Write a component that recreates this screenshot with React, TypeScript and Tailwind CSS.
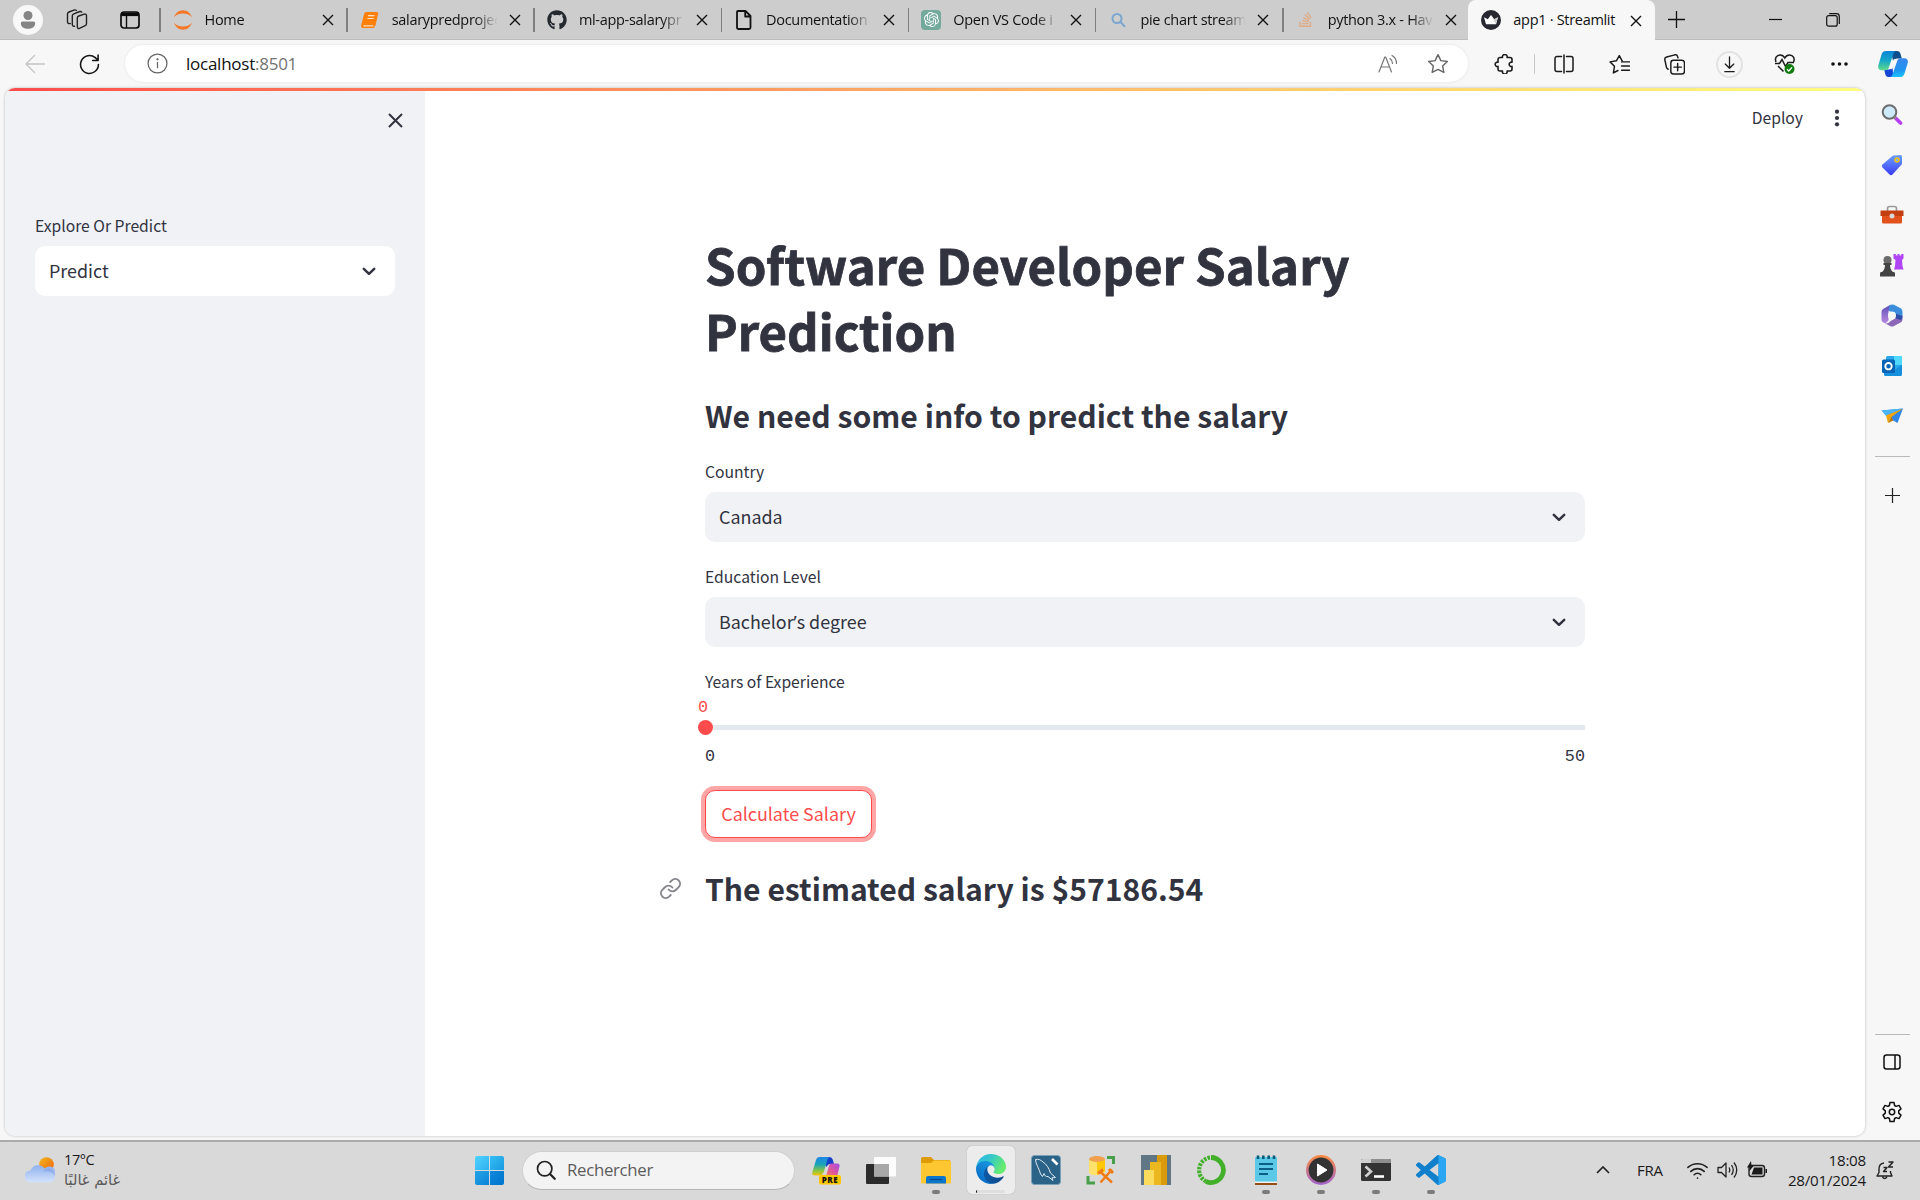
import React from "react";
import { FaGithub, FaStackOverflow } from "react-icons/fa";
import { SiOpenai } from "react-icons/si";
import { Wifi } from "lucide-react";

type Kids = { children?: React.ReactNode };

const SEGOE = "font-['Open_Sans','Noto_Sans',sans-serif]";
const SOURCE = "font-['Noto_Sans_CJK_SC',sans-serif]";

/* ---------- generic line icon ---------- */
function Ico({ s = 20, sw = 1.3, c = "#1b1b1b", children }: Kids & { s?: number; sw?: number; c?: string }) {
  return (
    <svg width={s} height={s} viewBox="0 0 20 20" fill="none" stroke={c} strokeWidth={sw} strokeLinecap="round" strokeLinejoin="round" className="shrink-0">
      {children}
    </svg>
  );
}

function Cross({ s = 12, sw = 1.4, c = "#111" }: { s?: number; sw?: number; c?: string }) {
  return (
    <svg width={s} height={s} viewBox={`0 0 ${s} ${s}`} stroke={c} strokeWidth={sw} className="shrink-0">
      <path d={`M1 1L${s - 1} ${s - 1}M${s - 1} 1L1 ${s - 1}`} />
    </svg>
  );
}

/* ---------- tab favicons ---------- */
const Jupyter = () => (
  <svg width="20" height="20" viewBox="0 0 20 20" fill="#f37726">
    <path d="M1 7.2C2.400 3 5.800 .2 10 .2s7.600 2.800 9 7C17.200 4.900 14 3.500 10 3.500S2.800 4.900 1 7.200z" />
    <path d="M1 12.800C2.400 17 5.800 19.800 10 19.800s7.600-2.800 9-7c-1.800 2.300-5 3.700-9 3.700s-7.200-1.400-9-3.700z" />
  </svg>
);
const Book = () => (
  <svg width="20" height="20" viewBox="0 0 20 20">
    <path d="M6.500 2h10.200c1.200 0 1.700.8 1.400 1.900L15.500 15.500c-.2.800-.8 1.200-1.500 1.200l.3 1.300H3.200C1.500 18 .8 16.800 1.200 15.200L4 4.200C4.400 2.800 5.100 2 6.500 2z" fill="#ff7f0b" />
    <path d="M8 5.700h6.500M7.300 8.500h6.500M3.500 15.800h10" stroke="#ffe2c4" strokeWidth="1.200" />
  </svg>
);
const Doc = () => (
  <Ico sw={1.8} c="#111">
    <path d="M4 1h7.500l5 5v11.500a1.500 1.500 0 0 1-1.500 1.500H4.500A1.500 1.500 0 0 1 3 17.500V2a1 1 0 0 1 1-1zM11.200 1.300V6.500h5" />
  </Ico>
);
const GPT = () => (
  <span className="flex size-5 items-center justify-center rounded-[4px] bg-[#74aa9c]">
    <SiOpenai size={15} color="#fff" />
  </span>
);
const Mag = () => (
  <Ico sw={2} c="#7ba6d0">
    <circle cx="9" cy="8.500" r="4.500" />
    <path d="M12.500 12l4 4.200" />
  </Ico>
);
const Crown = () => (
  <svg width="20" height="20" viewBox="0 0 20 20">
    <circle cx="10" cy="10" r="10" fill="#262730" />
    <path d="M3 7.200l3.800 2L10 5l3.200 4.200 3.800-2-2 7H5z" fill="#fff" />
    <path d="M10 5l3.200 4.200 3.800-2-2 7z" fill="#ccc" />
  </svg>
);

const tabs: { icon: React.ReactNode; title: string; active?: boolean }[] = [
  { icon: <Jupyter />, title: "Home" },
  { icon: <Book />, title: "salarypredproject" },
  { icon: <FaGithub size={20} color="#24292f" />, title: "ml-app-salarypr" },
  { icon: <Doc />, title: "Documentation" },
  { icon: <GPT />, title: "Open VS Code i" },
  { icon: <Mag />, title: "pie chart stream" },
  { icon: <FaStackOverflow size={17} color="#e0ab84" />, title: "python 3.x - Hav" },
  { icon: <Crown />, title: "app1 · Streamlit", active: true },
];

function TabBar() {
  return (
    <div className="flex h-10 items-stretch border-b border-[#bdbdbd] bg-[#cdcdcd]">
      <div className="flex w-[159px] items-center pl-[13px]">
        <span className="flex size-[30px] items-center justify-center rounded-full bg-[#f8f8f8]">
          <svg width="16" height="18" viewBox="0 0 16 18" fill="#858585">
            <circle cx="8" cy="4.500" r="4.500" />
            <path d="M2.500 10.500h11A1.700 1.700 0 0 1 15.200 12.200c0 3.700-3.200 5.500-7.200 5.500S.8 15.900.8 12.200A1.700 1.700 0 0 1 2.500 10.500z" />
          </svg>
        </span>
        <span className="ml-[23px]">
          <svg width="22" height="21" viewBox="0 0 22 21" fill="none" stroke="#222" strokeWidth="1.400" strokeLinecap="round">
            <path d="M11.300 8.800q.1-1.300 1.400-1.800l5.600-1.900q2-.5 2.200 1.500v8.200q0 1.300-1.300 1.800l-5.700 2.700q-2 .6-2.200-1.300z" />
            <path d="M8.500 17.300q-2 .2-2.200-1.500V6.800q.1-1.400 1.500-2l6-2.300q1.300-.3 1.900.6" />
            <path d="M4.200 14.500q-2.500.5-2.700-1.500V5q.1-1.400 1.500-2l5.500-2.100q1.200-.2 1.800.5" />
          </svg>
        </span>
        <span className="ml-8">
          <svg width="20" height="18" viewBox="0 0 20 18" fill="none" stroke="#0b0b0b" strokeWidth="1.700">
            <rect x="1" y="1" width="18" height="16" rx="3" />
            <path d="M1.500 3.300h17" strokeWidth="3.600" />
            <path d="M6.500 5v12" strokeWidth="1.400" />
          </svg>
        </span>
      </div>
      {tabs.map((t, i) => (
        <div
          key={i}
          className={
            t.active
              ? "-mr-px -mb-px -ml-px flex w-[187px] items-center rounded-t-[8px] bg-[#f7f7f7] pl-[13px]"
              : "flex w-[187.2px] items-center"
          }
        >
          {!t.active && <span className="mr-3 h-6 w-[1.500px] shrink-0 bg-[#808080]" />}
          <span className="flex size-5 shrink-0 items-center justify-center">{t.icon}</span>
          <span
            className={
              (t.active ? "" : "[mask-image:linear-gradient(to_right,#000_76%,transparent_97%)] ") +
              "ml-3 w-[109px] overflow-hidden text-[14.5px] leading-6 tracking-[-0.3px] whitespace-nowrap text-[#111]"
            }
          >
            {t.title}
          </span>
          <span className="ml-[6px] flex w-4 shrink-0 justify-center pt-px">
            <Cross />
          </span>
        </div>
      ))}
      <div className="flex flex-1 items-center pl-[14px]">
        <svg width="17" height="17" viewBox="0 0 17 17" stroke="#111" strokeWidth="1.300">
          <path d="M8.500 0v17M0 8.500h17" />
        </svg>
        <svg width="13" height="13" viewBox="0 0 13 13" stroke="#111" strokeWidth="1.200" className="ml-[84px]">
          <path d="M0 6.500h13" />
        </svg>
        <svg width="14" height="14" viewBox="0 0 14 14" fill="none" stroke="#111" strokeWidth="1.200" className="ml-[44px]">
          <rect x=".7" y="2.700" width="10.500" height="10.500" rx="2" />
          <path d="M3.200.7H10.500a2.800 2.800 0 0 1 2.800 2.800V11" />
        </svg>
        <span className="ml-[44px]">
          <Cross s={14} sw={1.2} />
        </span>
      </div>
    </div>
  );
}

function Copilot() {
  return (
    <svg width="30" height="26" viewBox="0 0 30 26">
      <defs>
        <linearGradient id="cpa" x1="0" y1="0" x2="0" y2="1">
          <stop offset="0" stopColor="#0a84d8" />
          <stop offset=".5" stopColor="#16a7c6" />
          <stop offset="1" stopColor="#5fdc8c" />
        </linearGradient>
        <linearGradient id="cpb" x1="0" y1="0" x2="0" y2="1">
          <stop offset="0" stopColor="#3a86ec" />
          <stop offset=".6" stopColor="#1f93f0" />
          <stop offset="1" stopColor="#18c2ff" />
        </linearGradient>
      </defs>
      <path d="M15 0h4c2 0 3 1.300 3.500 3l1.300 4.500h-4c-3 0-4 1.500-4.700 3L13 0z" fill="#0d4f8c" />
      <path d="M15 26h-4.500c-1.800 0-2.800-1.300-3.300-3l-1-4.500h4.300c2.500 0 3.600-1.600 4.300-3z" fill="#1546d8" />
      <path d="M8 0h10c-1.800.3-2.400 2-3 4l-4 12c-.7 2.200-2 3.200-4 3.200H3.500C.8 19.200-.3 17.300.3 14.600L3.500 3.600C4.200 1.200 5.500 0 8 0z" fill="url(#cpa)" />
      <path d="M22 26H12c1.800-.3 2.400-2 3-4l4-11.500c.7-2.200 2-3.200 4-3.200h3.500c2.700 0 3.800 1.900 3.200 4.600l-3.200 10.500C25.800 24.800 24.500 26 22 26z" fill="url(#cpb)" />
      <path d="M15.800 8L18 8.500 14.200 18.500l-2-1z" fill="#f7f7f7" />
    </svg>
  );
}

const starPath = "M10 1.500l2.600 5.400 5.900.8-4.300 4.100 1.100 5.900L10 14.900l-5.300 2.800 1.100-5.900L1.500 7.700l5.900-.8z";

function Toolbar() {
  return (
    <div className="flex h-12 items-center bg-[#f7f7f7]">
      <span className="ml-[25px] flex">
        <Ico c="#c4c4c4" sw={1.3}>
          <path d="M19.500 10H1M9.500 1.500L1 10l8.500 8.500" />
        </Ico>
      </span>
      <span className="ml-[34px] flex">
        <Ico s={21} c="#161616" sw={1.5}>
          <path d="M18.500 10A8.500 8.500 0 1 1 15.500 3.500L18 6M18.200 1v5.200H13" />
        </Ico>
      </span>
      <div className="-mt-px ml-[25px] flex h-[37px] w-[1343px] items-center rounded-full bg-white pl-[22px] shadow-[0_0_3px_rgba(0,0,0,0.09)]">
        <Ico c="#666" sw={1.2} s={21}>
          <circle cx="10" cy="10" r="9" />
          <path d="M10 9v5" />
          <circle cx="10" cy="6" r=".5" fill="#666" />
        </Ico>
        <span className="ml-[18px] text-[17px] tracking-[-0.25px] text-[#111]">
          localhost<span className="text-[#737373]">:8501</span>
        </span>
        <span className="mr-[19px] ml-auto flex items-center gap-[29px]">
          <Ico c="#777" sw={1.2}>
            <path d="M1 18L6.800 3h.9L13.500 18M3 13h8.500M12 4.500a6 6 0 0 1 2.500 5M14 1.500a9 9 0 0 1 4.500 8" />
          </Ico>
          <Ico c="#666" sw={1.3} s={22}>
            <path d={starPath} />
          </Ico>
        </span>
      </div>
      <span className="ml-[26px] flex">
        <svg width="21" height="20" viewBox="0 0 21 20" fill="none" stroke="#1b1b1b" strokeWidth="1.600" strokeLinejoin="round">
          <path d="M6 3.500h2.500a2.400 2.400 0 1 1 4.600 0H16a2 2 0 0 1 2 2v2.700a2.200 2.200 0 1 0 0 4.200v2.600a2 2 0 0 1-2 2h-2.900a2.400 2.400 0 1 1-4.600 0H6a2 2 0 0 1-2-2v-2.600a2.200 2.200 0 1 1 0-4.200V5.500a2 2 0 0 1 2-2z" />
        </svg>
      </span>
      <span className="ml-[19px] h-5 w-px bg-[#c8c8c8]" />
      <span className="ml-[19px] flex">
        <Ico sw={1.5}>
          <path d="M7.500 2.500H3A2 2 0 0 0 1 4.500v11a2 2 0 0 0 2 2h4.500M12.500 2.500H17a2 2 0 0 1 2 2v11a2 2 0 0 1-2 2h-4.500M10 1v18" />
        </Ico>
      </span>
      <span className="ml-[35px] flex">
        <Ico sw={1.4} s={21}>
          <path d="M12.500 6.500L9.800 1.500 7 6.500l-6 1 4.200 4.200L4.200 18l4.300-2.300M12 7.500h7.500M12 11.500h7.500M12 15.500h7.500" />
        </Ico>
      </span>
      <span className="ml-[34px] flex">
        <Ico sw={1.4} s={21}>
          <rect x="6.500" y="6" width="13" height="13" rx="2.500" />
          <path d="M13 9v7M9.500 12.500h7M4 14.500l-.6-.3A3 3 0 0 1 2.200 12L.8 5.500a2.300 2.300 0 0 1 1.700-2.700l7.800-2A2.300 2.300 0 0 1 13 2.500l.3 1" />
        </Ico>
      </span>
      <span className="ml-[31px] flex size-[27px] items-center justify-center rounded-full border-2 border-[#e2e2e2]">
        <Ico sw={1.5} s={17}>
          <path d="M10 1v13M5 9.500l5 5 5-5M4.500 18.500h11" />
        </Ico>
      </span>
      <span className="ml-[31px] flex">
        <svg width="22" height="22" viewBox="0 0 22 22" fill="none" stroke="#1b1b1b" strokeWidth="1.500">
          <path d="M2 9C.5 5.500 2.500 2 6 2c2.300 0 4 1.500 4.800 3C11.600 3.500 13.300 2 15.600 2c3.500 0 5.500 3.500 4 7M1 10.500h4.500L8 6.500l3.500 7 2.500-4h6M4 13l5.500 5.500" />
          <circle cx="15.500" cy="16" r="5" fill="#107c10" stroke="none" />
          <path d="M13 16.200l1.800 1.800 3.200-3.600" stroke="#fff" strokeWidth="1.300" />
        </svg>
      </span>
      <svg width="17" height="4" viewBox="0 0 17 4" fill="#111" className="ml-[35px]">
        <circle cx="2" cy="2" r="1.800" />
        <circle cx="8.500" cy="2" r="1.800" />
        <circle cx="15" cy="2" r="1.800" />
      </svg>
      <span className="ml-[30px] flex">
        <Copilot />
      </span>
    </div>
  );
}

/* ---------- Streamlit page ---------- */
const Chevron = () => (
  <svg width="14" height="9" viewBox="0 0 14 9" fill="none" stroke="#31333f" strokeWidth="2.500" strokeLinecap="round" strokeLinejoin="round">
    <path d="M1.800 1.800L7 6.800l5.200-5" />
  </svg>
);

function Field({ label, value, white }: { label: string; value: React.ReactNode; white?: boolean }) {
  return (
    <div className="flex flex-col">
      <span className="flex h-[31px] items-start pt-px text-[15.7px] leading-5 text-[#31333f]">{label}</span>
      <div className={(white ? "bg-white" : "bg-[#f0f2f6]") + " flex h-[50px] items-center justify-between rounded-[10px] pr-[19px] pl-[14px]"}>
        <span className="pb-[2px] text-[17.9px] leading-6 whitespace-nowrap text-[#31333f]">{value}</span>
        <Chevron />
      </div>
    </div>
  );
}

function Page() {
  return (
    <div className={SOURCE + " ml-[5px] flex h-[1048px] w-[1860px] flex-col overflow-hidden rounded-[10px] bg-white shadow-[0_0_3px_rgba(0,0,0,0.25)]"}>
      <div className="h-[3px] shrink-0 bg-linear-to-r from-[#ff4b4b] to-[#fffd80]" />
      <div className="flex flex-1">
        <aside className="flex w-[420px] flex-col bg-[#f0f2f6] px-[30px]">
          <div className="flex h-[124px] justify-end pt-[22px]">
            <span className="-mr-[8px]">
              <Cross s={15} sw={2} c="#31333f" />
            </span>
          </div>
          <Field label="Explore Or Predict" value="Predict" white />
        </aside>
        <main className="flex flex-1 flex-col text-[#31333f]">
          <header className="flex h-[54px] items-center justify-end pr-[25px]">
            <span className="text-[15.700px] leading-5">Deploy</span>
            <svg width="6" height="18" viewBox="0 0 6 18" fill="#31333f" className="ml-[31px]">
              <circle cx="3" cy="2.700" r="2.100" />
              <circle cx="3" cy="9" r="2.100" />
              <circle cx="3" cy="15.300" r="2.100" />
            </svg>
          </header>
          <div className="ml-[280px] flex w-[880px] flex-col">
            <h1 className="mt-[86px] text-[49.1px] leading-[66px] font-bold [-webkit-text-stroke:0.8px_#31333f]">
              Software Developer Salary
              <br />
              Prediction
            </h1>
            <h3 className="mt-[31px] h-[67px] text-[30.15px] leading-[42px] font-semibold">We need some info to predict the salary</h3>
            <Field label="Country" value="Canada" />
            <div className="h-6" />
            <Field
              label="Education Level"
              value={
                <>
                  Bachelor<span className="font-['Noto_Sans']">’</span>s degree
                </>
              }
            />
            <div className="h-6" />
            <span className="h-5 pt-px text-[15.7px] leading-5">Years of Experience</span>
            <span className="mt-[7px] -ml-[7px] font-['Liberation_Mono',monospace] text-[16.800px] leading-5 text-[#ff4b4b]">0</span>
            <div className="mt-[2px] -ml-[7.500px] flex h-[15px] items-center">
              <span className="size-[15px] rounded-full bg-[#ff4b4b]" />
              <span className="h-[5px] flex-1 bg-[#e4e8ef]" />
            </div>
            <div className="mt-[12px] flex justify-between font-['Liberation_Mono',monospace] text-[16.800px] leading-5">
              <span>0</span>
              <span>50</span>
            </div>
            <button className="mt-[23px] h-[48px] w-[167px] rounded-[10px] border border-[#ff4b4b] bg-white pb-[2px] text-[17.9px] leading-6 whitespace-nowrap text-[#ff4b4b] shadow-[0_0_0_4px_#ffa5a5]">
              Calculate Salary
            </button>
            <div className="mt-[29px] -ml-[46px] flex items-center">
              <svg width="23" height="23" viewBox="0 0 24 24" fill="none" stroke="#85868c" strokeWidth="2" strokeLinecap="round" strokeLinejoin="round">
                <path d="M10 13a5 5 0 0 0 7.540.540l3-3a5 5 0 0 0-7.070-7.070l-1.720 1.710" />
                <path d="M14 11a5 5 0 0 0-7.540-.540l-3 3a5 5 0 0 0 7.070 7.070l1.710-1.710" />
              </svg>
              <h3 className="ml-[23px] text-[30.1px] leading-[42px] font-semibold whitespace-nowrap">The estimated salary is $57186.54</h3>
            </div>
          </div>
        </main>
      </div>
    </div>
  );
}

/* ---------- Edge sidebar ---------- */
const sideIcons = [
  <svg width="22" height="22" viewBox="0 0 22 22">
    <path d="M14.500 14l5 5" stroke="#b63df0" strokeWidth="3.600" strokeLinecap="round" />
    <circle cx="8.500" cy="8" r="6.800" fill="#cdeafc" stroke="#6d6d6d" strokeWidth="2" />
    <path d="M13.300 12.800l1.700 1.700" stroke="#8a8a8a" strokeWidth="2" />
  </svg>,
  <svg width="22" height="22" viewBox="0 0 22 22">
    <defs>
      <linearGradient id="tag" x1="0" y1="0" x2="0" y2="1">
        <stop offset="0" stopColor="#6aa0ff" />
        <stop offset="1" stopColor="#3b3bf5" />
      </linearGradient>
    </defs>
    <path d="M12 1.500l7.500-.5q1.500 0 1.500 1.500v7.500L11.500 20.500q-1.500 1.500-3 0L1.500 13.500q-1.500-1.500 0-3z" fill="url(#tag)" />
    <circle cx="16" cy="6" r="2" fill="#7fb0ff" stroke="#f4c20d" strokeWidth="1.600" />
  </svg>,
  <svg width="24" height="20" viewBox="0 0 24 20">
    <path d="M7.500 6V3.500Q7.500 1.500 9.500 1.500h5q2 0 2 2V6" fill="none" stroke="#9a9a9a" strokeWidth="1.700" />
    <path d="M2 10h20v7q0 1.500-1.500 1.500h-17Q2 18.500 2 17z" fill="#e2511c" />
    <path d="M1 5.500h22q.5 0 .5.500v5H.5V6q0-.5.500-.5z" fill="#c33f10" />
    <circle cx="12" cy="11" r="2.500" fill="#d8d8d8" />
  </svg>,
  <svg width="24" height="24" viewBox="0 0 24 24">
    <path d="M13.500 1h2.300v1.500h1.700V1h2v1.500h1.700V1h2.300v4.500L22 7l.5 6 1 3.500H14l1-3.500.5-6-2-1.500z" fill="#b045f5" />
    <circle cx="7.500" cy="7" r="4" fill="#6b6b6b" />
    <path d="M3.500 10h8v2H10q0 4.500 3 7h1q1 0 1 2v2.500H0V21q0-2 1-2h1q3-2.500 3-7H3.500z" fill="#444" />
  </svg>,
  <svg width="22" height="23" viewBox="0 0 22 23">
    <defs>
      <linearGradient id="ma" x1="0" y1="0" x2="0" y2="1">
        <stop offset="0" stopColor="#5b4fb5" />
        <stop offset="1" stopColor="#b98ae0" />
      </linearGradient>
    </defs>
    <path d="M9.500 .8L2 5Q.5 6 .5 8v7.500q0 2 1.500 2.800l2.500 1.200 3-3V8q0-1 .5-2z" fill="url(#ma)" />
    <path d="M9.500 .8q2-.8 3.500 0L20 4.500Q21.500 5.500 21.500 8v4.500L14.500 10 8 7V4q0-2 1.500-3.200z" fill="#3b8edb" />
    <path d="M21.500 12v3.500q0 2-1.500 2.800L13 22q-2 1-4 0l-5-2.700q3.500.5 5-1.800l5.500-3.500 2-2.500z" fill="#8c69b8" />
    <path d="M14.500 9.500l7 2.500q0 3-2 4l-5.500-2z" fill="#2f4ea8" />
    <circle cx="11" cy="11.500" r="4" fill="#f7f7f7" />
  </svg>,
  <svg width="22" height="22" viewBox="0 0 22 22">
    <rect x="5" y="1" width="16" height="18" rx="1.500" fill="#28a8ea" />
    <path d="M13 1h6.500q1.500 0 1.500 1.500V10h-8z" fill="#50d9ff" />
    <path d="M3 20V11l9 5 9-6v9.500q0 1.500-1.500 1.500H4.500Q3 21 3 20z" fill="#1490df" />
    <rect x="1" y="4.500" width="13" height="13.500" rx="1.500" fill="#0364b8" />
    <circle cx="7.500" cy="11.200" r="3.200" fill="none" stroke="#fff" strokeWidth="1.900" />
  </svg>,
  <svg width="23" height="20" viewBox="0 0 23 20">
    <path d="M.5 4.500L22 2.500 16.500 17l-6-3.500z" fill="#2f86e8" />
    <path d="M.5 4.500L22 2.500 5 10z" fill="#49b7f7" />
    <path d="M5 9.500L22 2.500 10.500 11l-3.500 6z" fill="#f0a30a" />
    <path d="M7 17l3.500-6 1.800 3.500z" fill="#b87400" />
  </svg>,
];

function EdgeSidebar() {
  return (
    <div className="flex h-[1052px] w-[54.500px] flex-col items-center">
      <div className="mt-[2px] flex flex-col items-center">
        {sideIcons.map((icon, i) => (
          <span key={i} className="flex h-[50.100px] items-center justify-center">
            {icon}
          </span>
        ))}
      </div>
      <span className="mt-[15.500px] h-px w-[35px] bg-[#b9b9b9]" />
      <svg width="15" height="15" viewBox="0 0 15 15" stroke="#222" strokeWidth="1.200" className="mt-[31px]">
        <path d="M7.500 0v15M0 7.500h15" />
      </svg>
      <span className="mt-auto h-px w-[35px] bg-[#b9b9b9]" />
      <svg width="18" height="16" viewBox="0 0 18 16" fill="none" stroke="#111" strokeWidth="1.500" className="mt-[19px]">
        <rect x="1" y="1" width="16" height="14" rx="2.500" />
        <path d="M12 1v14" />
      </svg>
      <svg width="22" height="22" viewBox="0 0 22 22" fill="none" stroke="#111" strokeWidth="1.500" strokeLinejoin="round" className="mt-[31px] mb-[17px]">
        <path d="M9 1.500h4l.6 3 1.500.9 2.900-1 2 3.500-2.300 2v2.200l2.300 2-2 3.500-2.900-1-1.500.9-.6 3H9l-.6-3-1.500-.9-2.900 1-2-3.500 2.300-2V9.900L2 7.900l2-3.500 2.900 1 1.500-.9z" />
        <circle cx="11" cy="11" r="2.700" />
      </svg>
    </div>
  );
}

/* ---------- Taskbar ---------- */
const EdgeLogo = () => (
  <svg width="30" height="30" viewBox="0 0 256 256">
    <defs>
      <linearGradient id="e1" x1="0" y1="0" x2="1" y2="0">
        <stop offset="0" stopColor="#0c59a4" />
        <stop offset="1" stopColor="#114a8b" />
      </linearGradient>
      <linearGradient id="e2" x1=".8" y1="0" x2=".2" y2="1">
        <stop offset="0" stopColor="#1b9de2" />
        <stop offset="1" stopColor="#0667c4" />
      </linearGradient>
      <linearGradient id="e3" x1="0" y1="0" x2="1" y2=".4">
        <stop offset="0" stopColor="#2fb5ee" />
        <stop offset=".5" stopColor="#36c8c8" />
        <stop offset="1" stopColor="#66eb6e" />
      </linearGradient>
    </defs>
    <g transform="translate(-4.630 -4.920)">
      <path fill="url(#e1)" d="M235.680 195.460a93.730 93.730 0 0 1-10.540 4.710 101.870 101.870 0 0 1-35.900 6.460c-47.320 0-88.540-32.550-88.540-74.320A31.480 31.480 0 0 1 117.130 105c-42.800 1.800-53.800 46.400-53.800 72.530 0 73.880 68.090 81.370 82.760 81.370 7.910 0 19.840-2.300 27-4.560l1.310-.440A128.340 128.340 0 0 0 241 201.100a4 4 0 0 0-5.320-5.640Z" />
      <path fill="url(#e2)" d="M110.340 246.340A79.200 79.200 0 0 1 87.600 225a80.720 80.720 0 0 1 29.530-120c3.120-1.470 8.450-4.130 15.540-4a32.350 32.350 0 0 1 25.690 13 31.880 31.880 0 0 1 6.360 18.660c0-.210 24.460-79.600-80-79.600-43.900 0-80 41.660-80 78.210a130.150 130.150 0 0 0 12.110 56 128 128 0 0 0 156.380 67.110 75.550 75.550 0 0 1-62.780-8Z" />
      <path fill="url(#e3)" d="M156.940 153.780c-.810 1.050-3.300 2.500-3.300 5.660 0 2.610 1.700 5.120 4.720 7.230 14.380 10 41.490 8.680 41.560 8.680a59.560 59.560 0 0 0 30.270-8.350A61.380 61.380 0 0 0 260.620 114.100c.260-22.410-8-37.310-11.340-43.910C228.090 28.760 182.350 4.920 132.610 4.920a128 128 0 0 0-128 126.200c.480-36.540 36.800-66.050 80-66.050 3.500 0 23.460.340 42 10.070 16.340 8.580 24.900 18.940 30.850 29.210 6.180 10.670 7.280 24.150 7.280 29.520S162 147.200 156.940 153.780Z" />
    </g>
  </svg>
);

const apps: { icon: React.ReactNode; run?: boolean; active?: boolean }[] = [
  {
    icon: (
      <svg width="30" height="30" viewBox="0 0 30 30">
        <defs>
          <linearGradient id="pa" x1="0" y1="0" x2="0" y2="1">
            <stop offset="0" stopColor="#1f86e8" />
            <stop offset=".4" stopColor="#1aa4b8" />
            <stop offset=".75" stopColor="#8cc63f" />
            <stop offset="1" stopColor="#f4c20d" />
          </linearGradient>
          <linearGradient id="pb" x1="1" y1="0" x2="0" y2="1">
            <stop offset="0" stopColor="#a04be8" />
            <stop offset=".5" stopColor="#e0569c" />
            <stop offset="1" stopColor="#f7884a" />
          </linearGradient>
        </defs>
        <path d="M12 2h6.500q2.500 0 3.200 2.500L23 9h-5l-3 3z" fill="#1740c8" />
        <path d="M8.500 2H19q-2 .5-2.700 3l-3.500 12q-.8 3-3.300 3.500H4Q.5 20.500 1.400 17L5 5q.9-3 3.500-3z" fill="url(#pa)" />
        <path d="M20 8.500h6q3 0 2.500 3l-2 8.500q-.6 2-2.500 2H13q2-.5 2.700-3l2.200-8q.6-2.500 2.100-2.500z" fill="url(#pb)" />
        <rect x="8" y="20" width="22" height="9.500" rx="2" fill="#ffc800" />
        <text x="19" y="27.700" textAnchor="middle" fontSize="8" fontWeight="800" letterSpacing=".6" fontFamily="Open Sans" fill="#111">
          PRE
        </text>
      </svg>
    ),
  },
  {
    icon: (
      <svg width="30" height="30" viewBox="0 0 30 30">
        <rect x="0" y="9" width="23" height="20" rx="1" fill="#2b2b2b" />
        <rect x="8" y="2" width="22" height="19.500" rx="1" fill="#fff" fillOpacity=".9" />
        <rect x="8" y="9" width="15" height="12.500" fill="#a8a8a8" />
      </svg>
    ),
  },
  {
    run: true,
    icon: (
      <svg width="30" height="30" viewBox="0 0 30 30">
        <path d="M0 3.500Q0 2 1.500 2H10l3 3h16v5H0z" fill="#dd9b04" />
        <path d="M0 8h10l3-2.500h15.500q1.500 0 1.500 1.500v20.500q0 1-1 1H1q-1 0-1-1z" fill="#fdc731" />
        <path d="M5 28.500V23q0-2 2-2h16q2 0 2 2v5.500z" fill="#0b76cc" />
        <path d="M9 24.500h12" stroke="#0a4a86" strokeWidth="1.200" />
      </svg>
    ),
  },
  { icon: <EdgeLogo />, active: true },
  {
    icon: (
      <svg width="30" height="30" viewBox="0 0 30 30">
        <rect x=".5" y=".5" width="29" height="29" rx="3" fill="#2b6287" stroke="#7aa0b8" />
        <path d="M4.500 4.500c3-.8 5 .3 7.500 2.500 4 2.500 6 6.500 7.500 11l5 4.500-3.500.3 1 2.700-5-4c-2 .5-3.500-1-4-3l-1.500 3-2-2.500C8.500 14 4.500 9 4.500 4.500z" fill="none" stroke="#dbe9f2" strokeWidth="1" />
        <path d="M21 4l5.500 5.500" stroke="#fff" strokeWidth="2.600" />
      </svg>
    ),
  },
  {
    icon: (
      <svg width="30" height="30" viewBox="0 0 30 30">
        <path d="M3 4v14q3 3 8 2l8-2V4z" fill="#ffe26b" />
        <path d="M11 5h8v11l-8 4z" fill="#ffc90a" />
        <ellipse cx="11" cy="4" rx="8" ry="3" fill="#f0a04e" />
        <path d="M21 2.500h6.500V9M2 21v7h7" fill="none" stroke="#49a04b" strokeWidth="3" />
        <path d="M14 16.500l12 11M26 14.500L14.500 27.500" stroke="#f07a14" strokeWidth="2.400" />
        <path d="M12 18.500l5-4M23 14l4 4" stroke="#f07a14" strokeWidth="3" />
      </svg>
    ),
  },
  {
    icon: (
      <svg width="30" height="30" viewBox="0 0 30 30">
        <path d="M0 0h30v30H0z" fill="#617684" />
        <path d="M16 0h10v30H16z" fill="#d99a0c" />
        <path d="M9 7h11v23H9z" fill="#ecb81f" />
        <path d="M3 15h10v15H3z" fill="#fbdc5c" />
      </svg>
    ),
  },
  {
    icon: (
      <svg width="30" height="30" viewBox="0 0 30 30" fill="none" stroke="#43b02a">
        <path d="M15 2.500a12.500 12.500 0 1 1-5 24" strokeWidth="4.800" />
        <path d="M14 2.500A12.800 12.800 0 0 0 10 26.500" strokeWidth="4.200" strokeDasharray="2.600 1.100" />
      </svg>
    ),
  },
  {
    run: true,
    icon: (
      <svg width="24" height="30" viewBox="0 0 24 30">
        <rect x="1" y="2" width="22" height="25" rx="1" fill="#5bc8e8" />
        <path d="M1 26.500h22v2.200H1z" fill="#f0f0f0" />
        <path d="M1 28h22v2H1z" fill="#944d12" />
        <path d="M4 .5v3.500M9.300.5v3.500M14.700.5v3.500M20 .5v3.500" stroke="#0b5a78" strokeWidth="2.600" />
        <path d="M5 9h14M5 14h14M5 19h9" stroke="#0b5f85" strokeWidth="2" />
      </svg>
    ),
  },
  {
    run: true,
    icon: (
      <svg width="30" height="30" viewBox="0 0 30 30">
        <defs>
          <linearGradient id="mp" x1="0" y1="0" x2="0" y2="1">
            <stop offset="0" stopColor="#f98a45" />
            <stop offset="1" stopColor="#a465c8" />
          </linearGradient>
        </defs>
        <circle cx="15" cy="15" r="13.700" fill="#333" stroke="url(#mp)" strokeWidth="2.600" />
        <path d="M11.500 9v12L21 15z" fill="#fff" stroke="#fff" strokeLinejoin="round" />
      </svg>
    ),
  },
  {
    run: true,
    icon: (
      <svg width="30" height="30" viewBox="0 0 30 30">
        <rect x="0" y="4" width="30" height="22" rx="1.500" fill="#333" />
        <path d="M1.500 4h27Q30 4 30 5.500V8H0V5.500Q0 4 1.500 4z" fill="#8e8e8e" />
        <path d="M0 8V5.500Q0 4 1.500 4H10v4z" fill="#cfcfcf" />
        <path d="M4.500 11.500l5.500 5-5.500 5" fill="none" stroke="#d0d0d0" strokeWidth="2.600" />
        <path d="M13 21.500h10" stroke="#fff" strokeWidth="2.600" />
      </svg>
    ),
  },
  {
    run: true,
    icon: (
      <svg width="30" height="30" viewBox="0 0 100 100">
        <path fillRule="evenodd" fill="#1180cc" d="M70.900 99.300a6.200 6.200 0 0 0 5-.2l20.600-9.900A6.200 6.200 0 0 0 100 83.600V16.400a6.200 6.200 0 0 0-3.500-5.600L75.900.9a6.200 6.200 0 0 0-7.100 1.200L29.400 38 12.200 25a4.200 4.200 0 0 0-5.300.2L1.400 30.200a4.200 4.200 0 0 0 0 6.200L16.200 50 1.400 63.600a4.200 4.200 0 0 0 0 6.200l5.500 5a4.200 4.200 0 0 0 5.300.2l17.200-13 39.400 35.900c.6.600 1.300 1.100 2.100 1.400zM75 27.300L45.100 50 75 72.700z" />
        <path fill="#2aa6f2" d="M75.900 99.100l20.600-9.900A6.200 6.200 0 0 0 100 83.600V16.400a6.200 6.200 0 0 0-3.500-5.600L75.900.9q-3-1-6 .5Q75 1 75 6v88q0 4-5 5 3 1 5.900.1z" />
      </svg>
    ),
  },
];

function Taskbar() {
  return (
    <div className="flex h-[60px] items-center border-t-2 border-[#ababab] bg-[#d9d9d9] pb-[2px] text-[#1a1a1a]">
      <div className="flex w-[475px] items-center pl-[25px]">
        <svg width="30" height="26" viewBox="0 0 30 26">
          <defs>
            <linearGradient id="cl" x1="0" y1="0" x2="0" y2="1">
              <stop offset="0" stopColor="#8fb0ee" />
              <stop offset="1" stopColor="#d3e3fb" />
            </linearGradient>
            <linearGradient id="sn" x1="0" y1="0" x2="1" y2="1">
              <stop offset="0" stopColor="#f2b61e" />
              <stop offset="1" stopColor="#f0650f" />
            </linearGradient>
          </defs>
          <circle cx="21.500" cy="7.500" r="7.300" fill="url(#sn)" />
          <path d="M5.500 25.500a6 6 0 0 1 0-12A8 8 0 0 1 19.500 11.500a6.500 6.500 0 0 1 10.500 7.500q0 6.500-6.500 6.500z" fill="url(#cl)" />
          <path d="M17.500 14.500q3-4.500 8-3 4.500 2 4.500 7-4-5-12.500-4z" fill="#7f9fe6" fillOpacity=".55" />
        </svg>
        <div className="ml-[9px] flex flex-col text-[14.5px] leading-5 tracking-[-0.4px]">
          <span>17°C</span>
          <span className="font-['DejaVu_Sans',sans-serif] text-[14.700px] text-[#5a5a5a]" dir="rtl">
            غائم غالبًا
          </span>
        </div>
      </div>
      <div className="grid size-[29px] grid-cols-2 gap-px overflow-hidden rounded-[2px]">
        <span className="bg-linear-to-br from-[#4fd3ff] to-[#2bb0ee]" />
        <span className="bg-linear-to-br from-[#35bdf5] to-[#189be0]" />
        <span className="bg-linear-to-br from-[#22a4e6] to-[#0a84d8]" />
        <span className="bg-linear-to-br from-[#1089dc] to-[#0074cc]" />
      </div>
      <div className="ml-[18px] flex h-[39px] w-[273px] items-center rounded-full border border-b-[#b5b5b5] border-[#cfcfcf] bg-[#f3f3f3] pl-[13px]">
        <Ico s={20} sw={1.7} c="#222">
          <circle cx="8.700" cy="8.700" r="7.200" />
          <path d="M14 14l4.700 4.700" strokeWidth="2.300" />
        </Ico>
        <span className="ml-[11px] text-[16.800px] tracking-[-0.3px] text-[#5c5c5c]">Rechercher</span>
      </div>
      <div className="ml-[3px] flex">
        {apps.map((a, i) => (
          <div key={i} className="flex w-[55px] justify-center">
            <div
              className={
                (a.active ? "bg-[#ececec] shadow-[0_0_1px_#999]" : "") +
                " flex h-[48px] w-[48px] flex-col items-center justify-end rounded-[5px]"
              }
            >
              <span className="flex h-[30px] items-center">{a.icon}</span>
              <span
                className={
                  a.active
                    ? "mt-[6px] mb-px h-[3px] w-[29px] rounded-full border-l border-black bg-[#dedede]"
                    : a.run
                      ? "mt-[5px] h-[4px] w-2 rounded-full bg-[#7b7b7b]"
                      : "mt-[5px] mb-px h-[3px] w-2"
                }
              />
            </div>
          </div>
        ))}
      </div>
      <div className="ml-auto flex items-center pr-[26px] text-[14px]">
        <svg width="14" height="8" viewBox="0 0 14 8" fill="none" stroke="#222" strokeWidth="1.700">
          <path d="M1 7l6-6 6 6" />
        </svg>
        <span className="ml-[27px] w-[27px] text-[15px] tracking-[-0.3px]">FRA</span>
        <Wifi size={23} strokeWidth={1.7} className="ml-[22px]" color="#222" />
        <svg width="21" height="18" viewBox="0 0 21 18" fill="none" stroke="#222" strokeWidth="1.300" strokeLinejoin="round" className="ml-2">
          <path d="M1 6.500h3.500L9 2v14l-4.500-4.500H1zM12 6.500q1.500 2.500 0 5M14.500 4q3.500 5 0 10M17 1.500q5.500 7.500 0 15" />
        </svg>
        <svg width="21" height="18" viewBox="0 0 21 18" className="ml-[9px]">
          <rect x="2" y="4.500" width="15.500" height="11" rx="2.500" fill="none" stroke="#222" strokeWidth="1.400" />
          <path d="M7 6.500h8.500v7H4.500zM18.500 8H20v4h-1.500z" fill="#1a1a1a" />
          <path d="M4 0L0 6.500h2.500L2 10.500l5-6H4.500z" fill="#1a1a1a" />
        </svg>
        <div className="ml-[19px] flex w-[79px] flex-col items-end text-[15.2px] leading-5 tracking-[-0.25px] whitespace-nowrap">
          <span>18:08</span>
          <span>28/01/2024</span>
        </div>
        <svg width="18" height="19" viewBox="0 0 18 19" fill="none" stroke="#222" strokeWidth="1.400" strokeLinejoin="round" className="ml-[10px]">
          <path d="M8 2Q3 2.500 3 8v3.500L1 15h15l-1.500-3.500V10M6.500 16q2 3 4.500 0M12.500 1h4.500l-4.500 5h4.500M7.500 6.500H11L7.500 10.500H11" />
        </svg>
      </div>
    </div>
  );
}

export default function App() {
  return (
    <div className={SEGOE + " flex h-[1200px] w-[1920px] flex-col overflow-hidden bg-[#f7f7f7]"}>
      <TabBar />
      <Toolbar />
      <div className="flex h-[1052px]">
        <Page />
        <EdgeSidebar />
      </div>
      <Taskbar />
    </div>
  );
}
